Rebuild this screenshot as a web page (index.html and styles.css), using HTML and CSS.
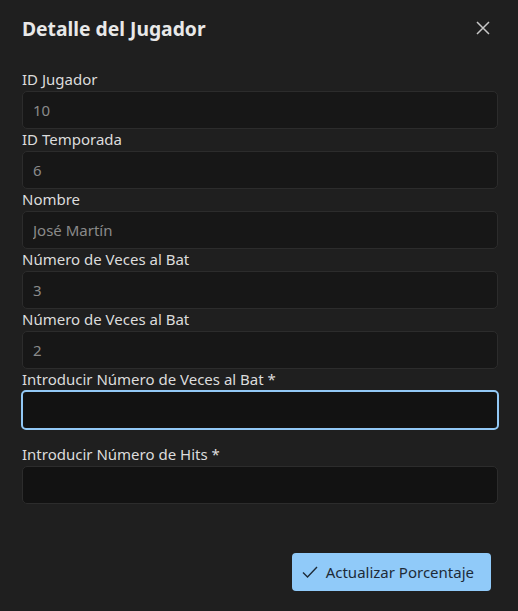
FILE: index.html
```html
<!DOCTYPE html>
<html lang="es">
<head>
  <meta charset="UTF-8">
  <meta name="viewport" content="width=device-width, initial-scale=1.0">
  <title>Detalle del Jugador</title>
  <link rel="stylesheet" href="styles.css">
</head>
<body>
  <div class="dialogo">
    <div class="cabecera">
      <h2>Detalle del Jugador</h2>
      <button class="cerrar" aria-label="Cerrar">
        <svg width="14" height="14" viewBox="0 0 14 14"><path d="M1 1L13 13M13 1L1 13" stroke="#c7c7c7" stroke-width="1.5" fill="none"/></svg>
      </button>
    </div>

    <div class="contenido">
      <label for="idJugador">ID Jugador</label>
      <input type="text" id="idJugador" value="10" disabled>

      <label for="idTemporada">ID Temporada</label>
      <input type="text" id="idTemporada" value="6" disabled>

      <label for="nombre">Nombre</label>
      <input type="text" id="nombre" value="José Martín" disabled>

      <label for="vecesBat">Número de Veces al Bat</label>
      <input type="text" id="vecesBat" value="3" disabled>

      <label for="hits">Número de Veces al Bat</label>
      <input type="text" id="hits" value="2" disabled>

      <label for="nuevoBat">Introducir Número de Veces al Bat *</label>
      <input type="number" id="nuevoBat" class="activo">

      <label for="nuevoHits" class="separado">Introducir Número de Hits *</label>
      <input type="number" id="nuevoHits">
    </div>

    <div class="pie">
      <button class="boton">
        <svg width="16" height="12" viewBox="0 0 16 12"><path d="M1 6.5L5.5 11L15 1" stroke="#1d2b38" stroke-width="1.4" fill="none"/></svg>
        Actualizar Porcentaje
      </button>
    </div>
  </div>
</body>
</html>
```

FILE: styles.css
```css
body {
  margin: 0;
  background: #1f1f1f;
  font-family: "Noto Sans", "Open Sans", sans-serif;
  color: #dedede;
}

.dialogo {
  width: 518px;
  height: 611px;
  box-sizing: border-box;
  padding: 0 20px 0 22px;
  display: flex;
  flex-direction: column;
}

.cabecera {
  height: 56px;
  display: flex;
  align-items: center;
  justify-content: space-between;
}

.cabecera h2 {
  margin: 0;
  font-size: 19.3px;
  font-weight: bold;
  color: #e8e8e8;
}

.cerrar {
  background: none;
  border: none;
  padding: 0;
  margin-right: 8px;
  width: 14px;
  height: 14px;
  display: flex;
  cursor: pointer;
}

.contenido {
  display: flex;
  flex-direction: column;
  padding-top: 13px;
}

label {
  font-size: 15px;
  line-height: 21px;
  color: #dcdcdc;
  margin-bottom: 1px;
}

label.separado {
  margin-top: 14px;
}

input {
  height: 38px;
  box-sizing: border-box;
  width: 476px;
  background: #171717;
  border: 1px solid #2c2c2c;
  border-radius: 5px;
  padding: 0 10px;
  font-family: inherit;
  font-size: 15px;
  color: #8a8a8a;
}

input:disabled {
  color: #8a8a8a;
}

input.activo {
  height: 40px;
  width: 478px;
  margin-left: -1px;
  margin-top: -1px;
  border: 2px solid #92c8f5;
  background: #121212;
}

input[type="number"] {
  background: #121212;
}

.pie {
  display: flex;
  justify-content: flex-end;
  padding-top: 49px;
  padding-right: 7px;
}

.boton {
  display: flex;
  align-items: center;
  gap: 8px;
  height: 38px;
  padding: 0 17px 0 10px;
  background: #90caf9;
  border: none;
  border-radius: 4px;
  font-family: inherit;
  font-size: 15px;
  color: #1d2b38;
  cursor: pointer;
}
```
